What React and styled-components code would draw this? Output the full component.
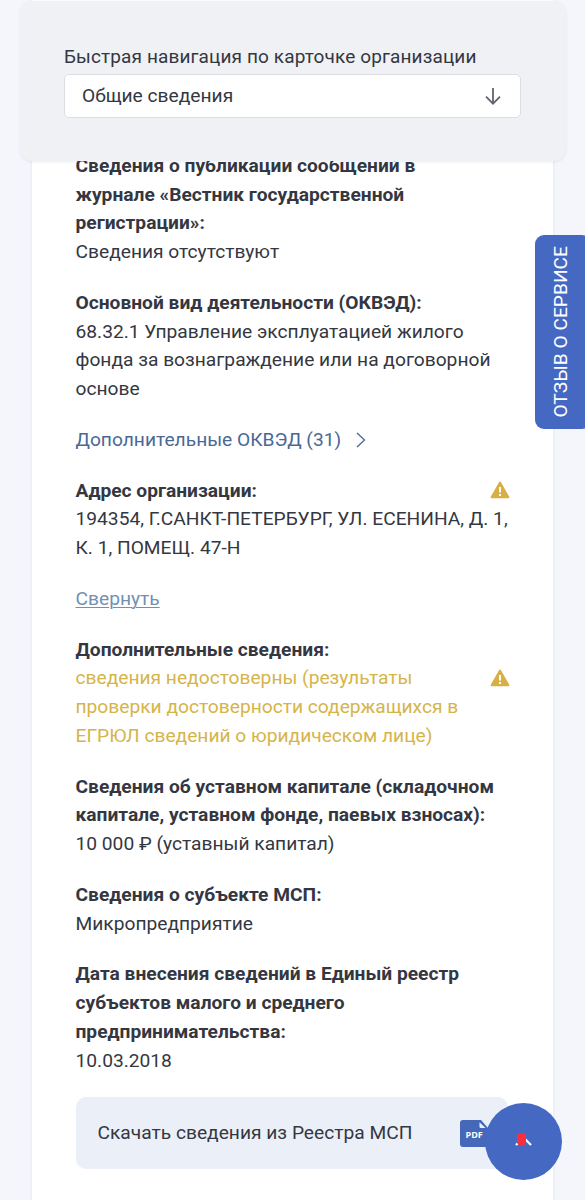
import React from 'react';
import styled, { createGlobalStyle } from 'styled-components';

const GlobalStyle = createGlobalStyle`
  * {
    box-sizing: border-box;
  }

  body {
    margin: 0;
    background-color: #f4f6fc;
    color: #343741;
    font-family: Roboto, 'Liberation Sans', sans-serif;
    font-size: 19.2px;
    line-height: 28.8px;
    overflow: hidden;
  }
`;

const Page = styled.div`
  position: relative;
  height: 1200px;
  padding: 0 32px;
  overflow: hidden;
`;

const QuickNav = styled.nav`
  position: absolute;
  z-index: 2;
  top: 1px;
  left: 20px;
  right: 19px;
  height: 160px;
  padding: 41px 45px 0 44px;
  background-color: #eff1f5;
  border-radius: 12px;
  box-shadow: 0 1px 3px rgba(60, 70, 100, 0.09);
`;

const NavLabel = styled.label`
  display: block;
  height: 32px;
  padding-top: 0.5px;
  font-size: 19px;
  letter-spacing: 0.12px;
  white-space: nowrap;
`;

const NavSelect = styled.button`
  display: flex;
  align-items: center;
  justify-content: space-between;
  width: 100%;
  height: 44px;
  padding: 0 17px 1px;
  border: 1px solid #dcdee4;
  border-radius: 5px;
  background-color: white;
  color: inherit;
  font-family: inherit;
  font-size: 19.2px;
`;

const Card = styled.main`
  display: flex;
  flex-direction: column;
  gap: 21.9px;
  height: 1200px;
  padding: 151.8px 45px 0 43.5px;
  background-color: white;
  box-shadow: 0 0 3px rgba(60, 70, 100, 0.12);
`;

const Section = styled.section`
  display: flex;
  flex-direction: column;
  white-space: nowrap;
`;

const Term = styled.h2`
  display: flex;
  align-items: center;
  justify-content: space-between;
  margin: 0;
  font-size: inherit;
  font-weight: 700;
`;

const Value = styled.p`
  display: flex;
  justify-content: space-between;
  margin: 0;
  color: ${props => (props.$warning ? '#d5b44a' : 'inherit')};
`;

const MoreLink = styled.a`
  display: flex;
  align-items: center;
  gap: 15px;
  color: #4a6896;
  white-space: nowrap;
`;

const CollapseLink = styled.a`
  align-self: flex-start;
  color: #7190b5;
  text-decoration: underline;
  text-decoration-thickness: 1px;
  text-underline-offset: 2px;
`;

const WarningSvg = styled.svg`
  flex: none;
  margin-top: ${props => props.$top || '0'};
  margin-right: -2px;
`;

const Download = styled.a`
  display: flex;
  flex: none;
  align-items: center;
  justify-content: space-between;
  height: 72px;
  margin-top: -0.9px;
  padding: 2px 20px 0 22px;
  border-radius: 10px;
  background-color: #ebeff8;
  white-space: nowrap;
`;

const FeedbackTab = styled.button`
  position: absolute;
  z-index: 3;
  top: 235px;
  right: -6px;
  width: 56px;
  height: 194px;
  padding: 0 5px 0 0;
  border: none;
  border-radius: 9px;
  background-color: #4569c3;
  color: white;
  display: flex;
  align-items: center;
  justify-content: center;
  font-family: inherit;
  font-size: 19.2px;
  line-height: 22px;
`;

const FeedbackText = styled.span`
  writing-mode: vertical-rl;
  transform: rotate(180deg);
  white-space: nowrap;
`;

const ScrollTop = styled.button`
  position: absolute;
  z-index: 3;
  left: 485px;
  top: 1103px;
  width: 77px;
  height: 77px;
  padding: 0;
  border: none;
  border-radius: 50%;
  background-color: #4569c3;
`;

const ArrowDown = () => (
  <svg width="20" height="20" viewBox="0 0 20 20" fill="none" stroke="#62656e" strokeWidth="1.8">
    <path d="M10 2v15.5M3 10.7l7 7 7-7" />
  </svg>
);

const ChevronRight = () => (
  <svg width="10" height="16" viewBox="0 0 10 16" fill="none" stroke="currentColor" strokeWidth="1.3">
    <path d="M1 1l7.5 7L1 15" />
  </svg>
);

const WarningIcon = ({ top }) => (
  <WarningSvg $top={top} width="20" height="18" viewBox="0 0 20 18">
    <path d="M10 1.6L18.4 16.2H1.6z" fill="#d8af45" stroke="#d8af45" strokeWidth="2" strokeLinejoin="round" />
    <path d="M10 6v5.6M10 13v2" stroke="white" strokeWidth="2" />
  </WarningSvg>
);

const PdfIcon = () => (
  <svg width="28" height="27" viewBox="0 0 28 27">
    <path d="M3 0h18l7 8v19H3a3 3 0 0 1-3-3V3a3 3 0 0 1 3-3z" fill="#4569b8" />
    <path d="M19.5 2.3v4.2Q19.500 8 21 8h4.500z" fill="#ebeff8" />
    <text x="5.5" y="17.6" fill="white" fontFamily="Open Sans, sans-serif" fontSize="9" fontWeight="700">PDF</text>
  </svg>
);

const App = () => (
  <>
    <GlobalStyle />
    <Page>
      <QuickNav>
        <NavLabel>Быстрая навигация по карточке организации</NavLabel>
        <NavSelect>
          Общие сведения
          <ArrowDown />
        </NavSelect>
      </QuickNav>

      <Card>
        <Section>
          <Term>Сведения о публикации сообщений в</Term>
          <Term>журнале «Вестник государственной</Term>
          <Term>регистрации»:</Term>
          <Value>Сведения отсутствуют</Value>
        </Section>

        <Section>
          <Term>Основной вид деятельности (ОКВЭД):</Term>
          <Value>68.32.1 Управление эксплуатацией жилого</Value>
          <Value>фонда за вознаграждение или на договорной</Value>
          <Value>основе</Value>
        </Section>

        <MoreLink>
          Дополнительные ОКВЭД (31)
          <ChevronRight />
        </MoreLink>

        <Section>
          <Term>
            Адрес организации:
            <WarningIcon top="-2px" />
          </Term>
          <Value>194354, Г.САНКТ-ПЕТЕРБУРГ, УЛ. ЕСЕНИНА, Д. 1,</Value>
          <Value>К. 1, ПОМЕЩ. 47-Н</Value>
        </Section>

        <CollapseLink>Свернуть</CollapseLink>

        <Section>
          <Term>Дополнительные сведения:</Term>
          <Value $warning>
            сведения недостоверны (результаты
            <WarningIcon top="4.5px" />
          </Value>
          <Value $warning>проверки достоверности содержащихся в</Value>
          <Value $warning>ЕГРЮЛ сведений о юридическом лице)</Value>
        </Section>

        <Section>
          <Term>Сведения об уставном капитале (складочном</Term>
          <Term>капитале, уставном фонде, паевых взносах):</Term>
          <Value>10 000 ₽ (уставный капитал)</Value>
        </Section>

        <Section>
          <Term>Сведения о субъекте МСП:</Term>
          <Value>Микропредприятие</Value>
        </Section>

        <Section>
          <Term>Дата внесения сведений в Единый реестр</Term>
          <Term>субъектов малого и среднего</Term>
          <Term>предпринимательства:</Term>
          <Value>10.03.2018</Value>
        </Section>

        <Download>
          Скачать сведения из Реестра МСП
          <PdfIcon />
        </Download>
      </Card>

      <FeedbackTab>
        <FeedbackText>ОТЗЫВ О СЕРВИСЕ</FeedbackText>
      </FeedbackTab>

      <ScrollTop>
        <svg width="77" height="77" viewBox="0 0 77 77" fill="none">
          <path d="M31 42L38.500 34.500l7.500 7.500" stroke="white" strokeWidth="2.2" />
          <path d="M33.500 30.500h6l1.500 1.500v8.500l-2 1.500h-5L32 40v-8z" fill="#fa2f3b" />
        </svg>
      </ScrollTop>
    </Page>
  </>
);

export default App;
